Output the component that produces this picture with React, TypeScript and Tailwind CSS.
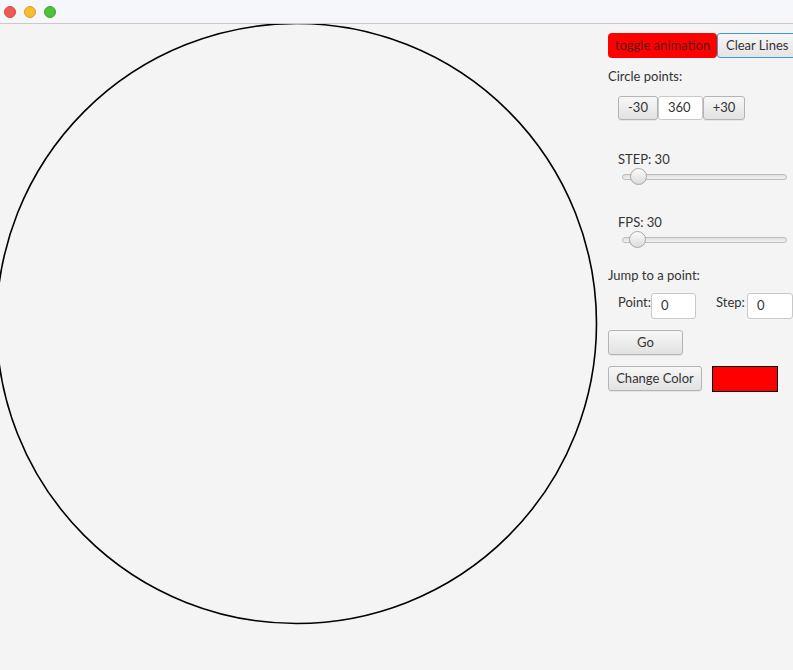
import React from "react";

const font = { fontFamily: '"Lato", "Open Sans", sans-serif' };

function Btn({ children, className = "" }: { children: React.ReactNode; className?: string }) {
  return (
    <div
      className={
        "flex items-center justify-center rounded-[3px] border border-[#b4b4b4] bg-gradient-to-b from-[#f7f7f7] to-[#e2e2e2] text-[13px] text-[#333] shadow-[0_1px_0_rgba(0,0,0,0.06)] " +
        className
      }
    >
      {children}
    </div>
  );
}

function Field({ value, className = "" }: { value: string; className?: string }) {
  return (
    <div
      className={
        "flex items-center rounded-[3px] border border-[#c8c8c8] bg-white pl-[9px] text-[13px] text-[#333] " + className
      }
    >
      {value}
    </div>
  );
}

function Slider({ pos }: { pos: number }) {
  return (
    <div className="relative ml-[14px] h-[18px] w-[165px]">
      <div className="absolute left-0 right-0 top-[6px] h-[6px] rounded-full border border-[#bdbdbd] bg-gradient-to-b from-[#e0e0e0] to-[#f2f2f2]" />
      <div
        className="absolute top-0 h-[17px] w-[17px] rounded-full border border-[#a8a8a8] bg-gradient-to-b from-[#fbfbfb] to-[#dcdcdc]"
        style={{ left: pos }}
      />
    </div>
  );
}

export default function App() {
  return (
    <div className="h-[670px] w-[793px] overflow-hidden bg-[#f4f4f4]" style={font}>
      <div className="flex h-[24px] items-center gap-[8px] border-b border-[#c9c9c9] bg-[#f6f7fb] pl-[4px]">
        <div className="h-[12px] w-[12px] rounded-full bg-[#ee5d55] border border-[#d9473f]" />
        <div className="h-[12px] w-[12px] rounded-full bg-[#f7bc2f] border border-[#dfa023]" />
        <div className="h-[12px] w-[12px] rounded-full bg-[#4cc23d] border border-[#3aa92c]" />
      </div>
      <div className="flex">
        <div className="w-[608px] shrink-0">
          <svg width="608" height="646" viewBox="0 0 608 646" className="block">
            <circle cx="296.5" cy="299.5" r="300" fill="none" stroke="#000" strokeWidth="1.6" />
          </svg>
        </div>
        <div className="flex w-[185px] shrink-0 flex-col overflow-hidden pt-[9px] text-[13px] text-[#333]">
          <div className="flex h-[25px]">
            <div className="flex w-[109px] shrink-0 items-center justify-center rounded-[4px] bg-[#ff0000] text-[13px] text-[#5a1a1a]">
              toggle animation
            </div>
            <div className="flex w-[82px] shrink-0 items-center rounded-[3px] border border-[#3b9bd8] bg-gradient-to-b from-[#f7f7f7] to-[#e4e4e4] pl-[8px] text-[13px] text-[#333] whitespace-nowrap">
              Clear Lines
            </div>
          </div>
          <div className="mt-[10px] h-[17px] leading-[17px]">Circle points:</div>
          <div className="ml-[10px] mt-[11px] flex h-[24px]">
            <Btn className="w-[40px]">-30</Btn>
            <Field value="360" className="w-[45px]" />
            <Btn className="w-[42px]">+30</Btn>
          </div>
          <div className="ml-[10px] mt-[31px] h-[16px] leading-[16px]">STEP: 30</div>
          <div className="mt-[1px]">
            <Slider pos={8} />
          </div>
          <div className="ml-[10px] mt-[28px] h-[16px] leading-[16px]">FPS: 30</div>
          <div className="mt-[1px]">
            <Slider pos={7} />
          </div>
          <div className="mt-[18px] h-[16px] leading-[16px]">Jump to a point:</div>
          <div className="mt-[10px] flex h-[26px] items-start">
            <div className="ml-[10px] mt-[1px] w-[34px] leading-[16px]">Point:</div>
            <Field value="0" className="h-[26px] w-[45px] shrink-0" />
            <div className="ml-[20px] mt-[1px] w-[31px] shrink-0 leading-[16px]">Step:</div>
            <Field value="0" className="h-[26px] w-[46px] shrink-0" />
          </div>
          <div className="mt-[11px]">
            <Btn className="h-[25px] w-[75px]">Go</Btn>
          </div>
          <div className="mt-[11px] flex h-[26px] items-start">
            <Btn className="h-[25px] w-[94px]">Change Color</Btn>
            <div className="ml-[10px] h-[26px] w-[66px] border border-black bg-[#ff0000]" />
          </div>
        </div>
      </div>
    </div>
  );
}
